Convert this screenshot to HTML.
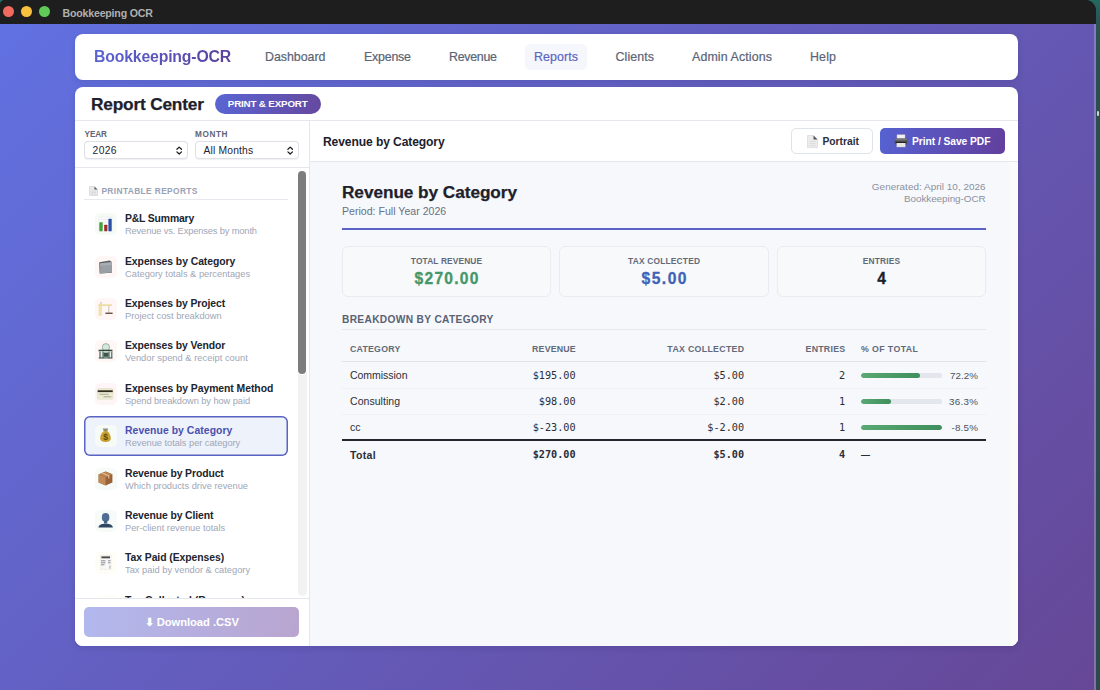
<!DOCTYPE html>
<html lang="en">
<head>
<meta charset="utf-8">
<title>Bookkeeping OCR</title>
<style>
*{box-sizing:border-box;margin:0;padding:0}
html,body{width:1100px;height:690px;overflow:hidden}
body{background:linear-gradient(180deg,#226a60 0,#2a5354 22px,#2b4f50 60px,#2a4a4b 100%);font-family:"Liberation Sans",sans-serif;position:relative;color:#1f2430}
.abs{position:absolute;white-space:nowrap}
.window{position:absolute;left:0;top:0;width:1095.6px;height:690px;border-radius:5px 11px 0 0;overflow:hidden;background:#1e1e1e}
.bg{position:absolute;left:0;top:24px;width:1096px;height:666px;background:linear-gradient(135deg,#6171e1,#664796)}
.edge{position:absolute;left:1094.4px;top:24px;width:1.2px;height:666px;background:rgba(255,255,255,.22)}
.titlebar{position:absolute;left:0;top:0;width:100%;height:24px;background:#1e1e1e}
.tl{position:absolute;top:6.2px;width:11px;height:11px;border-radius:50%}
.ttl{left:62.6px;top:5.6px;font-size:10.6px;font-weight:bold;color:#b0b0b0;line-height:14px}
.nav{position:absolute;left:74.5px;top:33.5px;width:943.8px;height:46px;background:#fff;border-radius:8px;box-shadow:0 2px 6px rgba(20,20,60,.12)}
.logo{left:19.6px;top:11.8px;font-size:15.8px;font-weight:bold;line-height:24px;color:#5a5cc4;
  background:linear-gradient(90deg,#5b64d2,#5a429c);-webkit-background-clip:text;background-clip:text;-webkit-text-fill-color:transparent}
.ni{margin-left:.5px;top:15.2px;font-size:12.4px;line-height:16px;color:#5a6476;-webkit-text-stroke:.2px currentColor}
.pill{position:absolute;left:450.8px;top:10.3px;width:62px;height:26.2px;border-radius:5px;background:#f5f7fc}
.cardsh{position:absolute;left:74.5px;top:87px;width:943.8px;height:558.6px;border-radius:8px;box-shadow:0 2px 6px rgba(20,20,60,.12)}
.card{position:absolute;left:74.5px;top:87px;width:943.8px;height:558.6px;background:#fff;border-radius:8px;overflow:hidden}
.hdr{position:absolute;left:0;top:0;width:100%;height:34px;border-bottom:1px solid #e4e7ec}
.h1{left:16.5px;top:5px;-webkit-text-stroke:.25px #1d212b;font-size:17.3px;font-weight:bold;line-height:24px;color:#1d212b}
.badge{position:absolute;left:140.5px;top:7px;width:105.5px;height:19.5px;border-radius:10px;
  background:linear-gradient(100deg,#5965d3,#66489f);color:#fff;font-size:9.8px;font-weight:bold;text-align:center;line-height:19.5px}
.side{position:absolute;left:.5px;top:34px;width:235px;height:524.6px;border-right:1px solid #e4e7ec;background:#fff}
.filters{position:absolute;left:0;top:0;width:234px;height:47px;border-bottom:1px solid #e4e7ec}
.flab{top:9px;font-size:8.2px;font-weight:bold;letter-spacing:.8px;color:#5d6677;line-height:10px}
.sel{position:absolute;top:20.4px;width:104px;height:17.6px;border:1px solid #dde0e6;border-radius:4px;background:#fff;
  font-size:10.3px;line-height:17px;padding-left:7.6px;color:#1f2430;box-shadow:0 .5px 1px rgba(0,0,0,.06)}
.chev{position:absolute;right:4.4px;top:3.4px;width:6.4px;height:9.2px}
.list{position:absolute;left:0;top:47px;width:234px;height:430px;overflow:hidden}
.sect{left:26.4px;top:18px;font-size:8.4px;font-weight:bold;letter-spacing:1.1px;color:#9aa1b5;line-height:10px}
.sline{position:absolute;left:9px;top:31px;width:204px;height:1px;background:#e7e9ee}
.item{position:absolute;left:9px;width:204px;height:40px;border-radius:6px}
.item.on{background:#eef2fb;box-shadow:inset 0 0 0 1.5px #5a62c2}
.tile{position:absolute;left:10px;top:9px;width:22px;height:22px;border-radius:5px;background:#f4f7f4}
.tile svg{position:absolute;left:0;top:0;width:22px;height:22px}
.it{left:41px;top:8px;font-size:10.4px;font-weight:bold;line-height:14px;color:#20242e}
.on .it{color:#4a4fae}
.is{left:41px;top:22px;font-size:9.3px;line-height:11px;color:#a0a6b6}
.track{position:absolute;left:222.6px;top:49px;width:9px;height:426px;border-radius:4.5px;background:#f2f2f3}
.thumb{position:absolute;left:223px;top:50px;width:8px;height:203.3px;border-radius:4px;background:#7d7d7d;box-shadow:0 0 0 1px #fff}
.foot{position:absolute;left:0;top:477px;width:234px;height:47px;border-top:1px solid #e4e7ec;background:#fff}
.dl{position:absolute;left:9.3px;top:8.4px;width:215px;height:30px;border-radius:5px;
  background:linear-gradient(100deg,#b2b8ee,#b9a5cf);color:#fff;font-size:11.2px;font-weight:bold;text-align:center;line-height:30px}
.main{position:absolute;left:235.5px;top:34px;width:708.3px;height:524.6px;background:#f7f8fb}
.tb{position:absolute;left:0;top:0;width:100%;height:41px;background:#fff;border-bottom:1px solid #e4e7ec}
.tbt{left:13px;top:13px;font-size:12.1px;font-weight:bold;line-height:16px;color:#1d212b}
.btn{position:absolute;top:7.2px;height:26px;border-radius:5px;font-size:10.3px;font-weight:bold;line-height:26.6px}
.b1{left:481px;width:82px;border:1px solid #dfe3ea;background:#fff;color:#2b2f3a}
.b2{left:570px;width:125px;background:linear-gradient(100deg,#5662d2,#623f9d);color:#fff;line-height:28.6px}
.vtrack{position:absolute;right:0;top:41px;width:8px;height:484px;background:#fbfbfc}
.rt{left:32px;top:60px;-webkit-text-stroke:.25px #1d212b;font-size:17.2px;font-weight:bold;line-height:22px;color:#1d212b}
.rp{left:32px;top:82.5px;font-size:10.6px;line-height:14px;color:#687082}
.gen{right:32.7px;text-align:right;font-size:9.9px;line-height:12px;color:#8a90a0;top:60px}
.rule{position:absolute;left:32px;top:106.7px;width:644px;height:2px;background:#5a63c4}
.stat{position:absolute;top:124.6px;width:209px;height:51px;border:1px solid #e9ebf0;border-radius:6px;background:#f8f9fb;text-align:center}
.sl{position:absolute;left:0;width:100%;top:9.4px;font-size:8.4px;font-weight:bold;letter-spacing:.9px;color:#626a7a;line-height:10px}
.sv{-webkit-text-stroke:.3px currentColor;position:absolute;left:0;width:100%;top:22.4px;font-size:15.6px;font-weight:bold;line-height:20px}
.bh{left:32px;top:192px;font-size:10.2px;font-weight:bold;letter-spacing:.9px;color:#596275;line-height:14px}
.hl{position:absolute;left:32px;width:644px;height:1px;background:#e6e8ed}
.th{font-size:8.8px;font-weight:bold;letter-spacing:.7px;color:#626a7a;line-height:12px}
.td{font-size:10.5px;line-height:14px;color:#2a2e38}
.mono{font-family:"DejaVu Sans Mono","Liberation Mono",monospace;font-size:10.2px;line-height:14px;color:#2a2e38}
.r{text-align:right}
.bar{position:absolute;left:551.2px;width:80.8px;height:5px;border-radius:3px;background:#e3e6ec;overflow:hidden}
.bar i{display:block;height:5px;border-radius:3px;background:linear-gradient(90deg,#5aa872,#3f8f5c)}
.pct{font-size:9.8px;line-height:12px;color:#4a5162}
#c0{letter-spacing:-0.03px;margin-right:0.03px}
#c1{letter-spacing:0.05px;margin-right:-0.05px}
#c3{letter-spacing:0.32px;margin-right:-0.32px}
#f1{letter-spacing:-0.08px;margin-right:0.08px}
#f2{letter-spacing:0.62px;margin-right:-0.62px}
#h1{letter-spacing:0.20px;margin-right:-0.20px}
#h2{letter-spacing:0.16px;margin-right:-0.16px}
#h3{letter-spacing:0.30px;margin-right:-0.30px}
#h4{letter-spacing:0.26px;margin-right:-0.26px}
#h5{letter-spacing:0.38px;margin-right:-0.38px}
#is0{letter-spacing:-0.14px;margin-right:0.14px}
#is3{letter-spacing:0.03px;margin-right:-0.03px}
#is4{letter-spacing:-0.08px;margin-right:0.08px}
#is5{letter-spacing:-0.04px;margin-right:0.04px}
#it0{letter-spacing:-0.16px;margin-right:0.16px}
#it1{letter-spacing:-0.06px;margin-right:0.06px}
#it2{letter-spacing:-0.08px;margin-right:0.08px}
#it3{letter-spacing:-0.08px;margin-right:0.08px}
#it4{letter-spacing:-0.05px;margin-right:0.05px}
#it5{letter-spacing:0.06px;margin-right:-0.06px}
#it6{letter-spacing:-0.10px;margin-right:0.10px}
#it7{letter-spacing:-0.10px;margin-right:0.10px}
#it8{letter-spacing:-0.06px;margin-right:0.06px}
#n1{letter-spacing:-0.02px;margin-right:0.02px}
#n2{letter-spacing:-0.21px;margin-right:0.21px}
#n3{letter-spacing:-0.27px;margin-right:0.27px}
#n4{letter-spacing:0.10px;margin-right:-0.10px}
#n5{letter-spacing:0.10px;margin-right:-0.10px}
#n6{letter-spacing:0.12px;margin-right:-0.12px}
#n7{letter-spacing:0.17px;margin-right:-0.17px}
#p0{letter-spacing:0.03px;margin-right:-0.03px}
#p1{letter-spacing:0.28px;margin-right:-0.28px}
#p2{letter-spacing:0.20px;margin-right:-0.20px}
#s1{letter-spacing:0.36px;margin-right:-0.36px}
#s2{letter-spacing:0.16px;margin-right:-0.16px}
#t_b2{letter-spacing:-0.07px;margin-right:0.07px}
#t_badge{letter-spacing:-0.17px;margin-right:0.17px}
#t_bh{letter-spacing:0.33px;margin-right:-0.33px}
#t_dl{letter-spacing:-0.04px;margin-right:0.04px}
#t_g1{letter-spacing:0.05px;margin-right:-0.05px}
#t_g2{letter-spacing:-0.05px;margin-right:0.05px}
#t_h1{letter-spacing:-0.19px;margin-right:0.19px}
#t_logo{letter-spacing:-0.18px;margin-right:0.18px}
#t_rt{letter-spacing:-0.04px;margin-right:0.04px}
#t_s1{letter-spacing:0.12px;margin-right:-0.12px}
#t_s2{letter-spacing:0.20px;margin-right:-0.20px}
#t_s3{letter-spacing:0.17px;margin-right:-0.17px}
#t_sect{letter-spacing:0.37px;margin-right:-0.37px}
#t_tbt{letter-spacing:-0.11px;margin-right:0.11px}
#t_title{letter-spacing:-0.20px;margin-right:0.20px}
#t_v1{letter-spacing:1.23px;margin-right:-1.23px}
#t_v2{letter-spacing:1.49px;margin-right:-1.49px}
#t_v3{letter-spacing:1.31px;margin-right:-1.31px}
</style>
</head>
<body>
<div style="position:absolute;left:1097px;top:111px;width:2.4px;height:5px;background:#cfd6d6;border-radius:1px"></div>
<div class="window">
  <div class="bg"></div>
  <div class="edge"></div>
  <div class="titlebar">
    <div class="tl" style="left:3px;background:#f06a5e"></div>
    <div class="tl" style="left:21.1px;background:#f8c23f"></div>
    <div class="tl" style="left:39.3px;background:#5fca58"></div>
    <div class="abs ttl" id="t_title">Bookkeeping OCR</div>
  </div>
  <div class="nav">
    <div class="abs logo" id="t_logo">Bookkeeping-OCR</div>
    <div class="pill"></div>
    <div class="abs ni" id="n1" style="left:190px">Dashboard</div>
    <div class="abs ni" id="n2" style="left:289px">Expense</div>
    <div class="abs ni" id="n3" style="left:374px">Revenue</div>
    <div class="abs ni" id="n4" style="left:459px;color:#5a65c6">Reports</div>
    <div class="abs ni" id="n5" style="left:540.5px">Clients</div>
    <div class="abs ni" id="n6" style="left:617px">Admin Actions</div>
    <div class="abs ni" id="n7" style="left:735px">Help</div>
  </div>
  <div class="cardsh"></div>
  <div class="card">
    <div class="hdr">
      <div class="abs h1" id="t_h1">Report Center</div>
      <div class="badge"><span id="t_badge">PRINT &amp; EXPORT</span></div>
    </div>
    <div class="side">
      <div class="filters">
        <div class="abs flab" id="f1" style="left:9.5px">YEAR</div>
        <div class="abs flab" id="f2" style="left:120px">MONTH</div>
        <div class="sel" style="left:9px"><span id="s1">2026</span><svg class="chev" viewBox="0 0 7 10"><path d="M1 3.6 3.5 1.2 6 3.6M1 6.4 3.5 8.8 6 6.4" fill="none" stroke="#1a1a1a" stroke-width="1.35" stroke-linecap="round" stroke-linejoin="round"/></svg></div>
        <div class="sel" style="left:120px"><span id="s2">All Months</span><svg class="chev" viewBox="0 0 7 10"><path d="M1 3.6 3.5 1.2 6 3.6M1 6.4 3.5 8.8 6 6.4" fill="none" stroke="#1a1a1a" stroke-width="1.35" stroke-linecap="round" stroke-linejoin="round"/></svg></div>
      </div>
      <div class="list" id="list">
        <svg class="abs" style="left:13.5px;top:17.5px;width:9px;height:10px" viewBox="0 0 9 10"><path d="M.5.5h5l3 3v6h-8z" fill="#e9e9ea" stroke="#c9c9cc" stroke-width=".5"/><path d="M5.5.5v3h3z" fill="#5a5a5e"/><path d="M2 5h5M2 6.5h5M2 8h5" stroke="#cfcfd2" stroke-width=".5"/></svg>
        <div class="abs sect" id="t_sect">PRINTABLE REPORTS</div>
        <div class="sline"></div>
        <div class="item" style="top:35.6px"><div class="tile" style="background:#f6fbf6;left:10.7px;top:9.6px"><svg viewBox="0 0 22 22"><rect x="4" y="4" width="13" height="14.5" fill="#fbfbfb" stroke="#e4e6ea" stroke-width=".5"/><path d="M5 6.5h11M5 9h11" stroke="#dcdfe4" stroke-width=".5"/><rect x="4.3" y="9.2" width="3.4" height="9" rx=".6" fill="#43a03c"/><rect x="9.2" y="11.7" width="3.2" height="6.5" rx=".6" fill="#9c2d27"/><rect x="13.4" y="5.8" width="3.3" height="12.4" rx=".6" fill="#2b4fa8"/></svg></div><div class="abs it" id="it0" style="left:41px;top:8.7px">P&amp;L Summary</div><div class="abs is" id="is0" style="left:41px;top:22.6px">Revenue vs. Expenses by month</div></div>
        <div class="item" style="top:78px"><div class="tile" style="background:#fef7f6;left:10.7px;top:9.6px"><svg viewBox="0 0 22 22"><path d="M4.2 6.2 14.5 4.6 16.4 5.6 16.9 16.8 4.6 17.6z" fill="#5c6066"/><path d="M5.2 7.2 16.6 6.2 17 16.4 5 17.4z" fill="#9a9ea5"/><path d="M5.2 7.2 16.6 6.2 16.7 9 5.2 10z" fill="#a9adb3"/></svg></div><div class="abs it" id="it1" style="left:41px;top:8.7px">Expenses by Category</div><div class="abs is" id="is1" style="left:41px;top:22.6px">Category totals &amp; percentages</div></div>
        <div class="item" style="top:120.4px"><div class="tile" style="background:#fef7f5;left:10.7px;top:9.6px"><svg viewBox="0 0 22 22"><rect x="3.6" y="5.8" width="3.3" height="12" fill="#efe2ae"/><rect x="3.6" y="6.3" width="13.4" height="1.7" fill="#ecdca0"/><rect x="5.2" y="4.2" width="1.6" height="1.2" fill="#b9b9b9"/><path d="M13.8 8v6.5" stroke="#b9aa9a" stroke-width=".7"/><rect x="10.4" y="14.6" width="7.2" height="1.3" fill="#5d4038"/></svg></div><div class="abs it" id="it2" style="left:41px;top:8.7px">Expenses by Project</div><div class="abs is" id="is2" style="left:41px;top:22.6px">Project cost breakdown</div></div>
        <div class="item" style="top:162.8px"><div class="tile" style="background:#fef7f6;left:10.7px;top:9.6px"><svg viewBox="0 0 22 22"><circle cx="10.9" cy="7.3" r="3.7" fill="#d7e6dc" stroke="#6d8a79" stroke-width=".6"/><rect x="3.6" y="9.7" width="13.8" height="1.7" fill="#2f4a3c"/><rect x="4" y="11.4" width="13" height="7" fill="#e9efec"/><path d="M5 11.4v7M8 11.4v7M14 11.4v7M16.8 11.4v7" stroke="#51695c" stroke-width="1.2"/><rect x="8.5" y="12.6" width="5" height="4.2" fill="#3c5548"/><rect x="3.8" y="17.3" width="13.4" height="1.2" fill="#51695c"/></svg></div><div class="abs it" id="it3" style="left:41px;top:8.7px">Expenses by Vendor</div><div class="abs is" id="is3" style="left:41px;top:22.6px">Vendor spend &amp; receipt count</div></div>
        <div class="item" style="top:205.2px"><div class="tile" style="background:#fef6f6;left:10.7px;top:9.6px"><svg viewBox="0 0 22 22"><rect x="2.4" y="5.6" width="15.6" height="10.6" rx="1" fill="#ecebd6" stroke="#d9d7bb" stroke-width=".5"/><rect x="2.7" y="7.3" width="15" height="1.8" fill="#2f2c1c"/><rect x="4.3" y="10.8" width="9.5" height=".9" fill="#a5a38c"/><rect x="8.5" y="13" width="7.8" height="1.4" fill="#b9b7a0"/></svg></div><div class="abs it" id="it4" style="left:41px;top:8.7px">Expenses by Payment Method</div><div class="abs is" id="is4" style="left:41px;top:22.6px">Spend breakdown by how paid</div></div>
        <div class="item on" style="top:247.6px"><div class="tile" style="background:#f6fbf8;left:10.7px;top:9.6px"><svg viewBox="0 0 22 22"><path d="M7.8 3.6h5.4l-1 2.6h-3.4z" fill="#8b8f72"/><path d="M8.8 6c-2.2 1.6-3.6 4.6-3.6 7.6 0 2.4 1.8 3.4 5.3 3.4s5.3-1 5.3-3.4c0-3-1.4-6-3.6-7.6z" fill="#c9a030"/><path d="M8.8 6c-1.4 1.2-2.4 3-3 5 .8-2 2-3.6 3.8-4.4z" fill="#e6c862"/><text x="10.5" y="15.2" font-family="Liberation Sans, sans-serif" font-size="8.5" font-weight="bold" text-anchor="middle" fill="#5e4708">$</text></svg></div><div class="abs it" id="it5" style="left:41px;top:8.7px">Revenue by Category</div><div class="abs is" id="is5" style="left:41px;top:22.6px">Revenue totals per category</div></div>
        <div class="item" style="top:290px"><div class="tile" style="background:#f6fbf7;left:10.7px;top:9.6px"><svg viewBox="0 0 22 22"><path d="M3.6 6.4 10.6 3.4 17.4 6.2 17.4 14.4 10.6 17.6 3.6 14.6z" fill="#9a6236"/><path d="M3.6 6.4 10.6 3.4 17.4 6.2 10.6 9.2z" fill="#b9844f"/><path d="M3.6 6.4 10.6 9.2 10.6 17.6 3.6 14.6z" fill="#c08a58"/><path d="M7 4.9 13.8 7.8 13.8 10.6" stroke="#dcb58a" stroke-width="1.3" fill="none"/></svg></div><div class="abs it" id="it6" style="left:41px;top:8.7px">Revenue by Product</div><div class="abs is" id="is6" style="left:41px;top:22.6px">Which products drive revenue</div></div>
        <div class="item" style="top:332.4px"><div class="tile" style="background:#f7fbf8;left:10.7px;top:9.6px"><svg viewBox="0 0 22 22"><ellipse cx="10.6" cy="7.4" rx="3.8" ry="4.4" fill="#4f6d92"/><path d="M9 10.5h3.2v3H9z" fill="#46648a"/><path d="M3.4 17.6c.3-2.6 2.4-3.9 7.2-3.9s7 1.3 7.3 3.9z" fill="#2f4763"/></svg></div><div class="abs it" id="it7" style="left:41px;top:8.7px">Revenue by Client</div><div class="abs is" id="is7" style="left:41px;top:22.6px">Per-client revenue totals</div></div>
        <div class="item" style="top:374.8px"><div class="tile" style="background:#fefef6;left:10.7px;top:9.6px"><svg viewBox="0 0 22 22"><path d="M5.4 3.6h10.6v13.8H5.4z" fill="#f8f8f8" stroke="#e0e0e0" stroke-width=".5"/><rect x="6.4" y="4.4" width="8.6" height="1.9" fill="#4b4b4b"/><path d="M6 8.8h4.5M6 10.8h4.5M6 12.8h3.5M13 8.8h2.5M13 10.8h2.5" stroke="#8b8b93" stroke-width="1"/><rect x="14" y="13.5" width="1.7" height="3.2" fill="#c9c9c9"/></svg></div><div class="abs it" id="it8" style="left:41px;top:8.7px">Tax Paid (Expenses)</div><div class="abs is" id="is8" style="left:41px;top:22.6px">Tax paid by vendor &amp; category</div></div>
        <div class="item" style="top:417.2px"><div class="tile" style="background:#fefef6;left:10.7px;top:9.6px"><svg viewBox="0 0 22 22"><path d="M5.4 3.6h10.6v13.8H5.4z" fill="#f8f8f8" stroke="#e0e0e0" stroke-width=".5"/><rect x="6.4" y="4.4" width="8.6" height="1.9" fill="#4b4b4b"/><path d="M6 8.8h4.5M6 10.8h4.5M6 12.8h3.5M13 8.8h2.5M13 10.8h2.5" stroke="#8b8b93" stroke-width="1"/><rect x="14" y="13.5" width="1.7" height="3.2" fill="#c9c9c9"/></svg></div><div class="abs it" id="it9" style="left:41px;top:8.7px">Tax Collected (Revenue)</div><div class="abs is" id="is9" style="left:41px;top:22.6px">Tax collected by category</div></div>
      </div>
      <div class="track"></div>
      <div class="thumb"></div>
      <div class="foot"><div class="dl"><span id="t_dl">&#11015; Download .CSV</span></div></div>
    </div>
    <div class="main">
      <div class="tb">
        <div class="abs tbt" id="t_tbt">Revenue by Category</div>
        <div class="btn b1"><svg class="abs" style="left:15px;top:6px;width:11px;height:13px" viewBox="0 0 11 13"><path d="M.5.5h6l4 4v8h-10z" fill="#ececed" stroke="#cdcdd0" stroke-width=".5"/><path d="M6.5.5v4h4z" fill="#55555a"/><path d="M2.5 6.5h6M2.5 8.5h6M2.5 10.5h6" stroke="#d2d2d5" stroke-width=".6"/></svg><span class="abs" id="t_b1" style="left:30.4px;top:0">Portrait</span></div>
        <div class="btn b2"><svg class="abs" style="left:14px;top:6px;width:14px;height:14px" viewBox="0 0 14 14"><rect x="3" y=".8" width="8" height="4.5" fill="#f1f1f1" stroke="#c9c9c9" stroke-width=".4"/><rect x=".8" y="4.6" width="12.4" height="6" rx="1" fill="#4a4a4e"/><rect x=".8" y="4.6" width="12.4" height="2" rx="1" fill="#77777c"/><rect x="2.8" y="8.6" width="8.4" height="4.4" fill="#e6e6e6" stroke="#bdbdbd" stroke-width=".4"/><rect x="2" y="8" width="10" height="1" fill="#222"/></svg><span class="abs" id="t_b2" style="left:32px;top:0">Print / Save PDF</span></div>
      </div>
      <div class="vtrack"></div>
      <div class="abs rt" id="t_rt">Revenue by Category</div>
      <div class="abs rp" id="t_rp">Period: Full Year 2026</div>
      <div class="abs gen" id="t_g1">Generated: April 10, 2026</div>
      <div class="abs gen" id="t_g2" style="top:72px">Bookkeeping-OCR</div>
      <div class="rule"></div>
      <div class="stat" style="left:32px"><div class="sl"><span id="t_s1">TOTAL REVENUE</span></div><div class="sv" style="color:#45976a"><span id="t_v1">$270.00</span></div></div>
      <div class="stat" style="left:249px;width:210px"><div class="sl"><span id="t_s2">TAX COLLECTED</span></div><div class="sv" style="color:#3f63b5"><span id="t_v2">$5.00</span></div></div>
      <div class="stat" style="left:467px"><div class="sl"><span id="t_s3">ENTRIES</span></div><div class="sv" style="color:#1d212b"><span id="t_v3">4</span></div></div>
      <div class="abs bh" id="t_bh">BREAKDOWN BY CATEGORY</div>
      <div class="hl" style="top:208px"></div>
      <div class="abs th" id="h1" style="left:40px;top:222px">CATEGORY</div>
      <div class="abs th r" id="h2" style="right:442.7px;top:222px">REVENUE</div>
      <div class="abs th r" id="h3" style="right:274.2px;top:222px">TAX COLLECTED</div>
      <div class="abs th r" id="h4" style="right:173.1px;top:222px">ENTRIES</div>
      <div class="abs th" id="h5" style="left:551px;top:222px">% OF TOTAL</div>
      <div class="hl" style="top:240.2px;background:#dfe2e8"></div>
      <div class="abs td" id="c0" style="left:40px;top:246.9px">Commission</div>
      <div class="abs mono r" id="r0" style="right:442.7px;top:247.5px">$195.00</div>
      <div class="abs mono r" id="x0" style="right:274.2px;top:247.5px">$5.00</div>
      <div class="abs mono r" id="e0" style="right:173.1px;top:247.5px">2</div>
      <div class="bar" style="top:251.9px"><i style="width:72.2%"></i></div>
      <div class="abs pct r" id="p0" style="right:40.4px;top:248.5px">72.2%</div>
      <div class="hl" style="top:267px;background:#eef0f4"></div>
      <div class="abs td" id="c1" style="left:40px;top:272.9px">Consulting</div>
      <div class="abs mono r" id="r1" style="right:442.7px;top:273.5px">$98.00</div>
      <div class="abs mono r" id="x1" style="right:274.2px;top:273.5px">$2.00</div>
      <div class="abs mono r" id="e1" style="right:173.1px;top:273.5px">1</div>
      <div class="bar" style="top:277.9px"><i style="width:36.3%"></i></div>
      <div class="abs pct r" id="p1" style="right:40.4px;top:274.5px">36.3%</div>
      <div class="hl" style="top:293px;background:#eef0f4"></div>
      <div class="abs td" id="c2" style="left:40px;top:298.9px">cc</div>
      <div class="abs mono r" id="r2" style="right:442.7px;top:299.5px">$-23.00</div>
      <div class="abs mono r" id="x2" style="right:274.2px;top:299.5px">$-2.00</div>
      <div class="abs mono r" id="e2" style="right:173.1px;top:299.5px">1</div>
      <div class="bar" style="top:303.9px"><i style="width:100%"></i></div>
      <div class="abs pct r" id="p2" style="right:40.4px;top:300.5px">-8.5%</div>
      <div class="hl" style="top:318.1px;height:2px;background:#23262e"></div>
      <div class="abs td" id="c3" style="left:40px;top:327px;font-weight:bold">Total</div>
      <div class="abs mono r" id="r3" style="right:442.7px;top:327px;font-weight:bold">$270.00</div>
      <div class="abs mono r" id="x3" style="right:274.2px;top:327px;font-weight:bold">$5.00</div>
      <div class="abs mono r" id="e3" style="right:173.1px;top:327px;font-weight:bold">4</div>
      <div class="abs td" id="p3" style="left:551px;top:327px;font-weight:bold;font-size:9px">&mdash;</div>
    </div>
  </div>
</div>
</body>
</html>
